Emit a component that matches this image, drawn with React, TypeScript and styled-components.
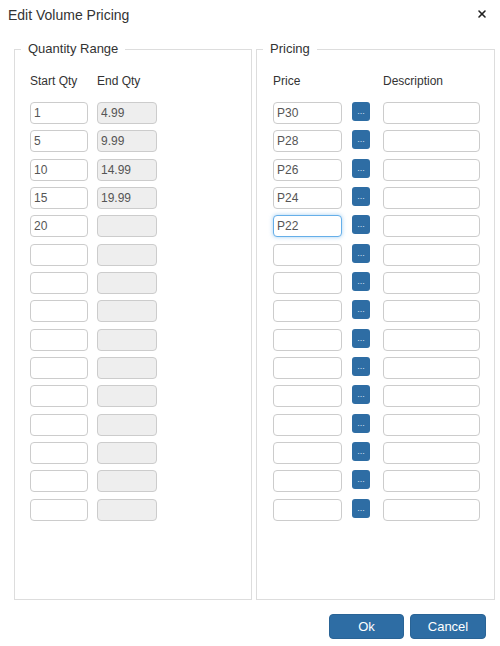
import styled, { createGlobalStyle, css } from "styled-components";
import { X } from "lucide-react";

const GlobalStyle = createGlobalStyle`
  body {
    margin: 0;
    background: #fff;
    font-family: "Liberation Sans", Arial, sans-serif;
    color: #333;
  }
`;

const Dialog = styled.div`
  width: 500px;
  height: 646px;
  box-sizing: border-box;
  display: flex;
  flex-direction: column;
`;

const Header = styled.div`
  height: 41px;
  display: flex;
  align-items: flex-start;
  justify-content: space-between;
  padding: 7px 12px 0 8px;
  box-sizing: border-box;
`;

const Title = styled.h1`
  margin: 0;
  font-size: 14px;
  font-weight: normal;
  line-height: 16px;
  color: #333;
`;

const CloseButton = styled.button`
  border: 0;
  background: none;
  padding: 0;
  margin-top: 1px;
  color: #222;
  display: flex;
  cursor: pointer;
`;

const Body = styled.div`
  display: flex;
  gap: 4px;
  height: 559px;
  padding: 0 5px 0 14px;
`;

const Group = styled.fieldset<{ $width: number }>`
  margin: 0;
  padding: 0;
  width: ${(p) => p.$width}px;
  box-sizing: border-box;
  border: 1px solid #ddd;
  min-width: 0;
`;

const Legend = styled.legend`
  margin-left: 6px;
  padding: 0 7px;
  font-size: 13px;
  line-height: 16px;
  color: #333;
`;

const Inner = styled.div<{ $left: number }>`
  padding: 16px 0 0 ${(p) => p.$left}px;
`;

const Grid = styled.div<{ $columns: string; $gap: number }>`
  display: grid;
  grid-template-columns: ${(p) => p.$columns};
  column-gap: ${(p) => p.$gap}px;
  row-gap: 6.33px;
  align-items: start;
`;

const Label = styled.div<{ $col?: number }>`
  font-size: 12px;
  line-height: 16px;
  color: #333;
  margin-bottom: 6.67px;
  grid-column: ${(p) => p.$col ?? "auto"};
`;

const Input = styled.input<{ $focused?: boolean; $col?: number }>`
  box-sizing: border-box;
  width: 100%;
  height: 22px;
  margin: 0;
  padding: 0 3px;
  border: 1px solid #ccc;
  border-radius: 4px;
  font-family: "Liberation Sans", Arial, sans-serif;
  font-size: 12px;
  color: #555;
  background: #fff;
  outline: none;
  grid-column: ${(p) => p.$col ?? "auto"};

  &:read-only {
    background: #eee;
  }

  ${(p) =>
    p.$focused &&
    css`
      border-color: #66afe9;
      box-shadow: 0 0 4px rgba(102, 175, 233, 0.6);
    `}
`;

const DotsButton = styled.button`
  grid-column: 3;
  width: 18px;
  height: 19px;
  margin: 0;
  padding: 0;
  border: 0;
  border-radius: 3px;
  background: #2e6da4;
  color: #d6e4f2;
  font-size: 9px;
  line-height: 15px;
  font-family: "Liberation Sans", Arial, sans-serif;
  cursor: pointer;
`;

const Footer = styled.div`
  display: flex;
  justify-content: flex-end;
  gap: 6px;
  padding: 14px 14px 0 0;
`;

const ActionButton = styled.button<{ $width: number }>`
  width: ${(p) => p.$width}px;
  height: 25px;
  border: 1px solid #2a6496;
  border-radius: 4px;
  background: #2e6da4;
  color: #fff;
  font-family: "Liberation Sans", Arial, sans-serif;
  font-size: 13px;
  font-weight: normal;
  padding: 0;
  cursor: pointer;
`;

const starts = ["1", "5", "10", "15", "20"];
const ends = ["4.99", "9.99", "14.99", "19.99"];
const prices = ["P30", "P28", "P26", "P24", "P22"];
const ROWS = 15;

export default function App() {
  const rows = Array.from({ length: ROWS }, (_, i) => i);

  return (
    <Dialog>
      <GlobalStyle />
      <Header>
        <Title>Edit Volume Pricing</Title>
        <CloseButton aria-label="Close">
          <X size={12} strokeWidth={3.2} />
        </CloseButton>
      </Header>
      <Body>
        <Group $width={238}>
          <Legend>Quantity Range</Legend>
          <Inner $left={15}>
            <Grid $columns="58px 60px" $gap={9}>
              <Label>Start Qty</Label>
              <Label>End Qty</Label>
              {rows.map((i) => [
                <Input key={`s${i}`} defaultValue={starts[i] ?? ""} />,
                <Input key={`e${i}`} readOnly value={ends[i] ?? ""} />,
              ])}
            </Grid>
          </Inner>
        </Group>
        <Group $width={239}>
          <Legend>Pricing</Legend>
          <Inner $left={16}>
            <Grid $columns="69px 10px 18px 13px 97px" $gap={0}>
              <Label $col={1}>Price</Label>
              <Label $col={5}>Description</Label>
              {rows.map((i) => [
                <Input key={`p${i}`} $col={1} defaultValue={prices[i] ?? ""} $focused={i === 4} />,
                <DotsButton key={`b${i}`}>...</DotsButton>,
                <Input key={`d${i}`} $col={5} defaultValue="" />,
              ])}
            </Grid>
          </Inner>
        </Group>
      </Body>
      <Footer>
        <ActionButton $width={75}>Ok</ActionButton>
        <ActionButton $width={76}>Cancel</ActionButton>
      </Footer>
    </Dialog>
  );
}
